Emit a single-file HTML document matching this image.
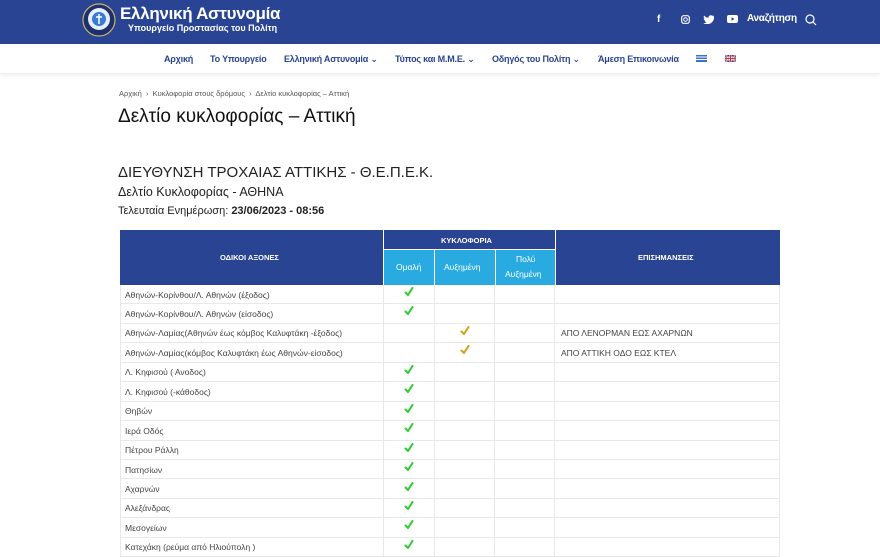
<!DOCTYPE html>
<html><head><meta charset="utf-8"><style>
*{margin:0;padding:0;box-sizing:border-box}
body{width:880px;height:557px;overflow:hidden;background:#fff;font-family:"Liberation Sans","DejaVu Sans",sans-serif;position:relative}
.top{position:absolute;left:0;top:0;width:880px;height:44px;background:#2a4494}
.nav{position:absolute;left:0;top:44px;width:880px;height:30px;background:#fff;border-bottom:1px solid #eee;box-shadow:0 2px 4px rgba(0,0,0,.05)}
.nav span{position:absolute;top:10px;font-size:9px;font-weight:bold;color:#2a4494;letter-spacing:-.2px}
.t{position:absolute;color:#222;white-space:nowrap}
.cell{position:absolute;font-size:8.5px;color:#444;white-space:nowrap}
.hl{position:absolute;background:#e8e8e8}
svg.ck{position:absolute;width:10px;height:10px}
</style></head><body>
<div class="top">
 <svg style="position:absolute;left:82px;top:3px" width="34" height="34" viewBox="0 0 34 34"><circle cx="17" cy="17" r="16" fill="#1c2f6e" stroke="#c9b26a" stroke-width="1.2"/><circle cx="17" cy="16" r="11" fill="#e8eef8"/><circle cx="17" cy="16" r="7" fill="#3a7bd5"/><path d="M17 11v10M14 14h6" stroke="#fff" stroke-width="1.5"/></svg>
 <div class="t" style="left:120px;top:4px;font-size:17px;font-weight:bold;color:#fff;letter-spacing:-.3px">Ελληνική Αστυνομία</div>
 <div class="t" style="left:128px;top:23px;font-size:9px;font-weight:bold;color:#fff">Υπουργείο Προστασίας του Πολίτη</div>
 <div class="t" style="left:657px;top:14px;font-size:10px;font-weight:bold;color:#fff">f</div>
 <svg style="position:absolute;left:681px;top:15px" width="9" height="9" viewBox="0 0 9 9"><rect x=".7" y=".7" width="7.6" height="7.6" rx="2" fill="none" stroke="#fff" stroke-width="1.2"/><circle cx="4.5" cy="4.5" r="1.8" fill="none" stroke="#fff" stroke-width="1"/></svg>
 <svg style="position:absolute;left:703px;top:15px" width="11" height="9" viewBox="0 0 11 9"><path d="M11 1c-.4.2-.8.3-1.3.4.5-.3.8-.7 1-1.2-.4.3-.9.4-1.4.5C8.4.2 7.3 0 6.5.6 5.7 1.1 5.4 2 5.6 2.8 3.8 2.7 2.1 1.900 1 .5.4 1.6.7 2.900 1.700 3.500c-.4 0-.7-.1-1-.3 0 1.200.8 2.200 1.900 2.400-.3.1-.7.1-1 0 .3 1 1.200 1.700 2.200 1.700C2.800 8 1.400 8.400 0 8.300 4.800 11 11 8 11 2.500V2c.4-.3.8-.6 1-1z" fill="#fff"/></svg>
 <svg style="position:absolute;left:727px;top:15px" width="11" height="8" viewBox="0 0 11 8"><rect width="11" height="8" rx="2" fill="#fff"/><path d="M4.500 2.200v3.600L7.500 4z" fill="#2a4494"/></svg>
 <div class="t" style="left:747px;top:13px;font-size:10px;font-weight:bold;color:#fff;letter-spacing:-.3px">Αναζήτηση</div>
 <svg style="position:absolute;left:805px;top:14px" width="12" height="12" viewBox="0 0 12 12"><circle cx="5" cy="5" r="4" fill="none" stroke="#fff" stroke-width="1.2"/><path d="M8 8l3 3" stroke="#fff" stroke-width="1.2"/></svg>
</div>
<div class="nav">
 <span style="left:164px">Αρχική</span>
 <span style="left:210px">Το Υπουργείο</span>
 <span style="left:284px">Ελληνική Αστυνομία ⌄</span>
 <span style="left:395px">Τύπος και Μ.Μ.Ε. ⌄</span>
 <span style="left:492px">Οδηγός του Πολίτη ⌄</span>
 <span style="left:598px">Άμεση Επικοινωνία</span>
 <svg style="position:absolute;left:696px;top:11px" width="11" height="7"><rect width="11" height="7" fill="#3d6fd0"/><rect y="1.5" width="11" height="1" fill="#fff"/><rect y="4" width="11" height="1" fill="#fff"/></svg>
 <svg style="position:absolute;left:725px;top:11px" width="11" height="7"><rect width="11" height="7" fill="#2b3c8f"/><path d="M0 0l11 7M11 0L0 7" stroke="#fff" stroke-width="1.4"/><path d="M0 0l11 7M11 0L0 7" stroke="#d33" stroke-width=".6"/><path d="M5.500 0v7M0 3.500h11" stroke="#fff" stroke-width="2"/><path d="M5.500 0v7M0 3.500h11" stroke="#d33" stroke-width="1"/></svg>
</div>
<div class="t" style="left:119px;top:89px;font-size:7.5px;color:#555">Αρχική &nbsp;›&nbsp; Κυκλοφορία στους δρόμους &nbsp;›&nbsp; Δελτίο κυκλοφορίας – Αττική</div>
<div class="t" style="left:118px;top:106px;font-size:19px;color:#111">Δελτίο κυκλοφορίας – Αττική</div>
<div class="t" style="left:118px;top:164px;font-size:15px;color:#222">ΔΙΕΥΘΥΝΣΗ ΤΡΟΧΑΙΑΣ ΑΤΤΙΚΗΣ - Θ.Ε.Π.Ε.Κ.</div>
<div class="t" style="left:118px;top:185px;font-size:12.5px;color:#222">Δελτίο Κυκλοφορίας - ΑΘΗΝΑ</div>
<div class="t" style="left:118px;top:205px;font-size:11px;color:#222">Τελευταία Ενημέρωση: <b>23/06/2023 - 08:56</b></div>

<div style="position:absolute;left:120px;top:230px;width:660px;height:55px;background:#2a4494"></div>
<div style="position:absolute;left:384px;top:250px;width:171px;height:35px;background:#29abe2"></div>
<div style="position:absolute;left:383px;top:230px;width:1px;height:55px;background:#fff"></div>
<div style="position:absolute;left:555px;top:230px;width:1px;height:55px;background:#fff"></div>
<div style="position:absolute;left:384px;top:249px;width:171px;height:1px;background:#fff"></div>
<div style="position:absolute;left:434px;top:250px;width:1px;height:35px;background:#fff"></div>
<div style="position:absolute;left:495px;top:250px;width:1px;height:35px;background:#fff"></div>
<div class="t" style="left:220px;top:253px;font-size:7.5px;font-weight:bold;color:#fff">ΟΔΙΚΟΙ ΑΞΟΝΕΣ</div>
<div class="t" style="left:441px;top:236px;font-size:7.5px;font-weight:bold;color:#fff">ΚΥΚΛΟΦΟΡΙΑ</div>
<div class="t" style="left:638px;top:253px;font-size:7.5px;font-weight:bold;color:#fff">ΕΠΙΣΗΜΑΝΣΕΙΣ</div>
<div class="t" style="left:396px;top:262px;font-size:8.5px;color:#fff">Ομαλή</div>
<div class="t" style="left:444px;top:262px;font-size:8.5px;color:#fff">Αυξημένη</div>
<div class="t" style="left:516px;top:254px;font-size:8.5px;color:#fff">Πολύ</div>
<div class="t" style="left:505px;top:269px;font-size:8.5px;color:#fff">Αυξημένη</div>

<div id="rows"></div>
<script>
(function(){
var rows=[["Αθηνών-Κορίνθου/Λ. Αθηνών (έξοδος)",1,""],["Αθηνών-Κορίνθου/Λ. Αθηνών (είσοδος)",1,""],["Αθηνών-Λαμίας(Αθηνών έως κόμβος Καλυφτάκη -έξοδος)",2,"ΑΠΟ ΛΕΝΟΡΜΑΝ ΕΩΣ ΑΧΑΡΝΩΝ"],["Αθηνών-Λαμίας(κόμβος Καλυφτάκη έως Αθηνών-είσοδος)",2,"ΑΠΟ ΑΤΤΙΚΗ ΟΔΟ ΕΩΣ ΚΤΕΛ"],["Λ. Κηφισού ( Ανοδος)",1,""],["Λ. Κηφισού (-κάθοδος)",1,""],["Θηβών",1,""],["Ιερά Οδός",1,""],["Πέτρου Ράλλη",1,""],["Πατησίων",1,""],["Αχαρνών",1,""],["Αλεξάνδρας",1,""],["Μεσογείων",1,""],["Κατεχάκη (ρεύμα από Ηλιούπολη )",1,""]];
var h="",y0=285,rh=19.45;
h+='<div class="hl" style="left:120px;top:285px;width:1px;height:272px"></div>';
[384,435,495,555,780].forEach(function(x){h+='<div class="hl" style="left:'+(x-1)+'px;top:285px;width:1px;height:272px"></div>'});
rows.forEach(function(r,i){var y=y0+i*rh;
h+='<div class="hl" style="left:120px;top:'+Math.round(y+rh-1)+'px;width:660px;height:1px"></div>';
h+='<div class="cell" style="left:125px;top:'+(y+4.5)+'px">'+r[0]+'</div>';
if(r[2])h+='<div class="cell" style="left:561px;top:'+(y+4.5)+'px">'+r[2]+'</div>';
var cx=r[1]==1?404:460,col=r[1]==1?"#2ecc2e":"#d4a017";
h+='<svg class="ck" viewBox="0 0 10 10" style="left:'+cx+'px;top:'+(y+2)+'px"><path d="M1.5 5.5L4 8L8.5 1" fill="none" stroke="'+col+'" stroke-width="2" stroke-linecap="round" stroke-linejoin="round"/></svg>';
});
document.getElementById("rows").innerHTML=h;
})();
</script>
</body></html>
